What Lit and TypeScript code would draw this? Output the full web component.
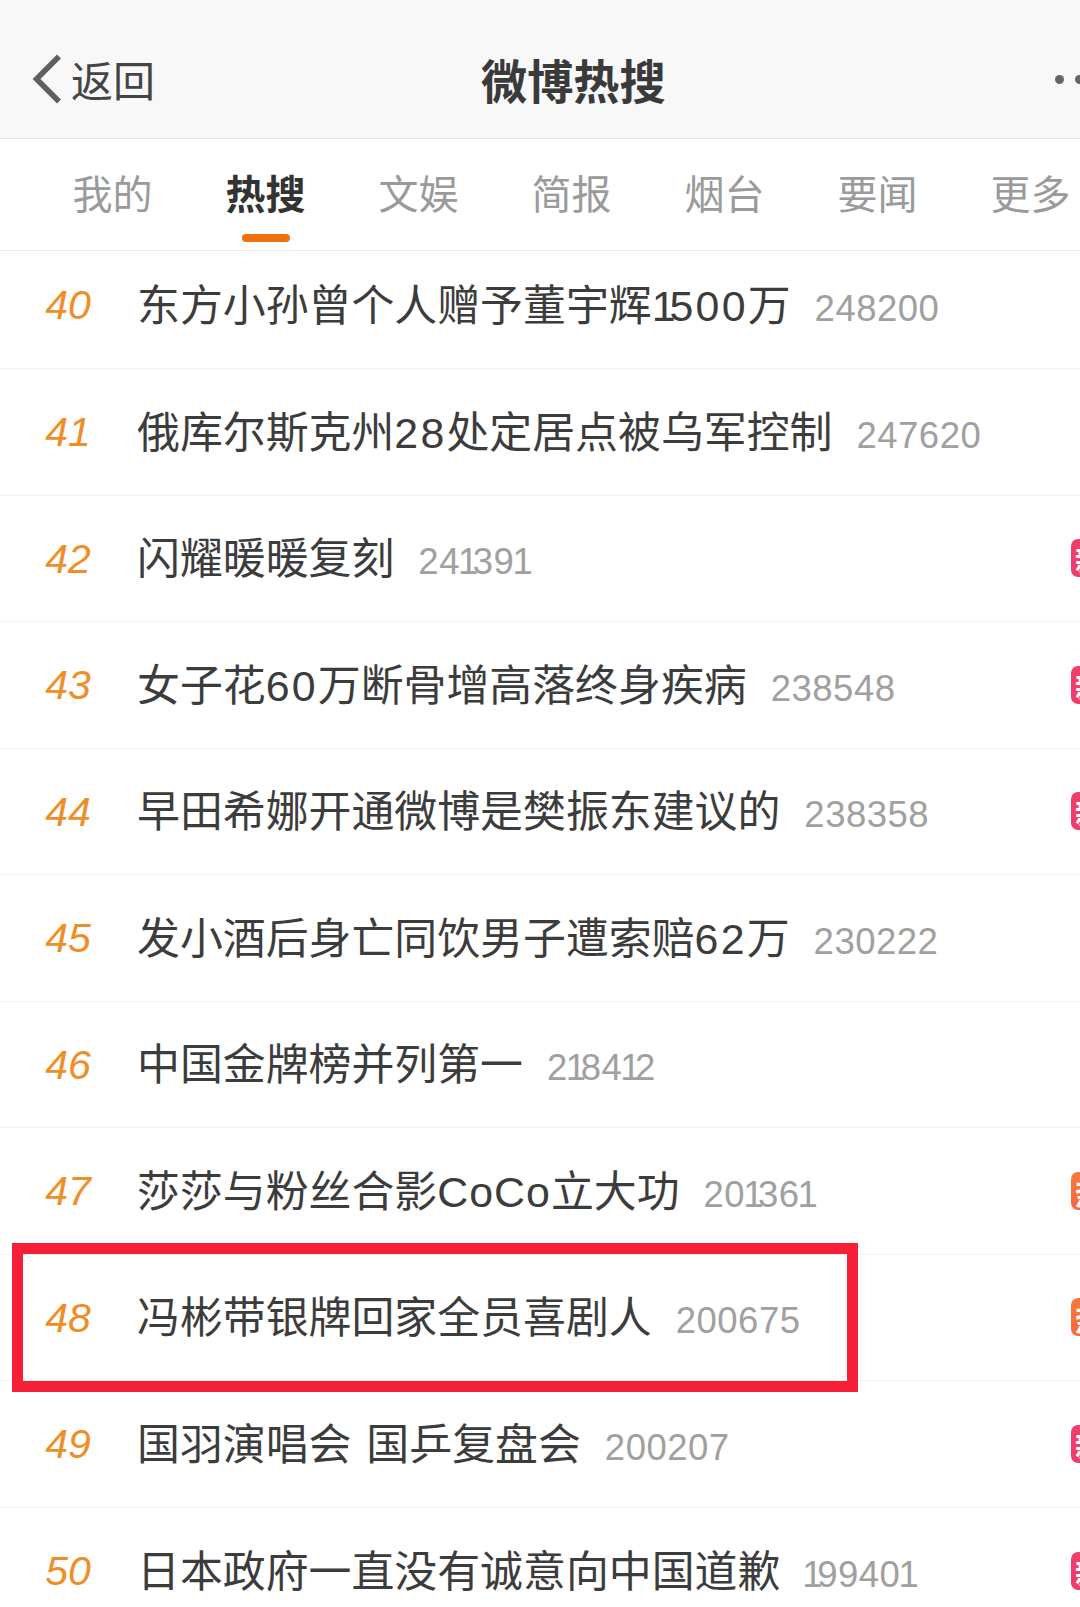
import { LitElement, html, css, nothing } from "lit";
import { customElement } from "lit/decorators.js";

type Row = { rank: number; title: string; count: string; badge?: "new" | "hot" };

const ROWS: Row[] = [
  { rank: 40, title: "东方小孙曾个人赠予董宇辉1500万", count: "248200" },
  { rank: 41, title: "俄库尔斯克州28处定居点被乌军控制", count: "247620" },
  { rank: 42, title: "闪耀暖暖复刻", count: "241391", badge: "new" },
  { rank: 43, title: "女子花60万断骨增高落终身疾病", count: "238548", badge: "new" },
  { rank: 44, title: "早田希娜开通微博是樊振东建议的", count: "238358", badge: "new" },
  { rank: 45, title: "发小酒后身亡同饮男子遭索赔62万", count: "230222" },
  { rank: 46, title: "中国金牌榜并列第一", count: "218412" },
  { rank: 47, title: "莎莎与粉丝合影CoCo立大功", count: "201361", badge: "hot" },
  { rank: 48, title: "冯彬带银牌回家全员喜剧人", count: "200675", badge: "hot" },
  { rank: 49, title: "国羽演唱会 国乒复盘会", count: "200207", badge: "new" },
  { rank: 50, title: "日本政府一直没有诚意向中国道歉", count: "199401", badge: "new" },
];

const TABS = ["我的", "热搜", "文娱", "简报", "烟台", "要闻", "更多"];

@customElement("app-root")
export class AppRoot extends LitElement {
  static styles = css`
    :host {
      display: block;
      width: 1080px;
      height: 1607px;
      overflow: hidden;
      background: #fff;
      position: relative;
      font-family: "Liberation Sans", "Noto Sans CJK SC", sans-serif;
    }
    .header {
      height: 139px;
      padding-top: 19px;
      box-sizing: border-box;
      background: #f8f8f8;
      border-bottom: 1px solid #e6e4e1;
      display: flex;
      align-items: center;
    }
    .back {
      width: 481px;
      padding-left: 32px;
      box-sizing: border-box;
      display: flex;
      align-items: center;
      gap: 9px;
      font-size: 42px;
      color: #444;
      flex-shrink: 0;
    }
    .chev {
      width: 30px;
      height: 50px;
      flex-shrink: 0;
    }
    .title {
      font-size: 46.2px;
      font-weight: 700;
      color: #3a3a3a;
      flex-shrink: 0;
    }
    .dots {
      margin-left: auto;
      margin-right: -4px;
      display: flex;
      gap: 11px;
      position: relative;
      top: 1px;
    }
    .dots i {
      width: 9px;
      height: 9px;
      border-radius: 50%;
      background: #666;
      display: block;
    }
    .tabs {
      height: 112px;
      display: flex;
      padding-left: 36px;
      border-bottom: 1px solid #eeeeee;
      box-sizing: border-box;
    }
    .tab {
      width: 153px;
      flex-shrink: 0;
      display: flex;
      flex-direction: column;
      align-items: center;
      padding-top: 32px;
      box-sizing: border-box;
      font-size: 40px;
      line-height: 48px;
      color: #9a9a9a;
    }
    .tab.active {
      color: #333;
      font-weight: 700;
    }
    .bar {
      width: 48px;
      height: 8px;
      border-radius: 4px;
      background: #f0700f;
      margin-top: 15px;
      flex-shrink: 0;
    }
    .row {
      height: 126.5px;
      box-sizing: border-box;
      display: flex;
      align-items: center;
      border-bottom: 1px solid #f2f2f2;
    }
    .row:first-child {
      height: 118px;
      padding-bottom: 10px;
    }
    .row:last-child {
      border-bottom: none;
    }
    .rank {
      width: 138px;
      padding-right: 2px;
      box-sizing: border-box;
      text-align: center;
      flex-shrink: 0;
      font-size: 41px;
      font-style: italic;
      color: #ef8e27;
      position: relative;
      top: 1px;
    }
    .name {
      font-size: 42.9px;
      word-spacing: 3px;
      color: #3c3c3c;
      white-space: pre;
      flex-shrink: 0;
      position: relative;
      top: -3px;
      margin-left: -1px;
    }
    .num {
      letter-spacing: 2.2px;
    }
    .word {
      letter-spacing: 1px;
    }
    .count {
      font-size: 36.5px;
      letter-spacing: 0.5px;
      color: #a0a0a0;
      margin-left: 24px;
      position: relative;
      top: 4px;
      flex-shrink: 0;
    }
    .name .one {
      letter-spacing: -6px;
    }
    .count .one {
      letter-spacing: -7.5px;
      position: relative;
      left: -2px;
    }
    .badge {
      margin-left: auto;
      margin-right: -29px;
      width: 38px;
      height: 38px;
      border-radius: 7px;
      flex-shrink: 0;
      display: flex;
      align-items: center;
      justify-content: center;
      color: #fff;
      font-size: 30px;
      font-weight: 700;
    }
    .badge.new {
      background: linear-gradient(180deg, #ef3f6b, #f23c68);
    }
    .badge.hot {
      background: linear-gradient(180deg, #f97a3c, #f9683a);
    }
    .mark {
      position: absolute;
      left: 12px;
      top: 1243px;
      width: 846px;
      height: 149px;
      box-sizing: border-box;
      border: 11px solid #f51f38;
      pointer-events: none;
    }
  `;

  /** Digit "1" is narrower in the reference's proportional numerals. */
  private digits(text: string) {
    return text
      .split(/(1)/)
      .filter((part) => part !== "")
      .map((part) => (part === "1" ? html`<span class="one">1</span>` : part));
  }

  /** Latin runs in titles sit slightly wider than the CJK text around them. */
  private titled(title: string) {
    return title
      .split(/([0-9A-Za-z]+)/)
      .filter((part) => part !== "")
      .map((part) => {
        if (/^[0-9]+$/.test(part)) return html`<span class="num">${this.digits(part)}</span>`;
        if (/^[A-Za-z]+$/.test(part)) return html`<span class="word">${part}</span>`;
        return part;
      });
  }

  render() {
    return html`
      <div class="header">
        <div class="back">
          <svg class="chev" viewBox="0 0 30 50" fill="none" aria-hidden="true">
            <path d="M27 2.5 L4.5 25 L27 47.5" stroke="#5f5f5f" stroke-width="5.5" />
          </svg>
          <span>返回</span>
        </div>
        <div class="title">微博热搜</div>
        <div class="dots"><i></i><i></i></div>
      </div>
      <div class="tabs">
        ${TABS.map(
          (t, i) => html`<div class="tab ${i === 1 ? "active" : ""}">
            <span>${t}</span>
            ${i === 1 ? html`<div class="bar"></div>` : nothing}
          </div>`
        )}
      </div>
      <div class="list">
        ${ROWS.map(
          (r) => html`<div class="row">
            <div class="rank">${r.rank}</div>
            <div class="name">${this.titled(r.title)}</div>
            <div class="count">${this.digits(r.count)}</div>
            ${r.badge
              ? html`<div class="badge ${r.badge}">${r.badge === "new" ? "新" : "热"}</div>`
              : nothing}
          </div>`
        )}
      </div>
      <div class="mark"></div>
    `;
  }
}
